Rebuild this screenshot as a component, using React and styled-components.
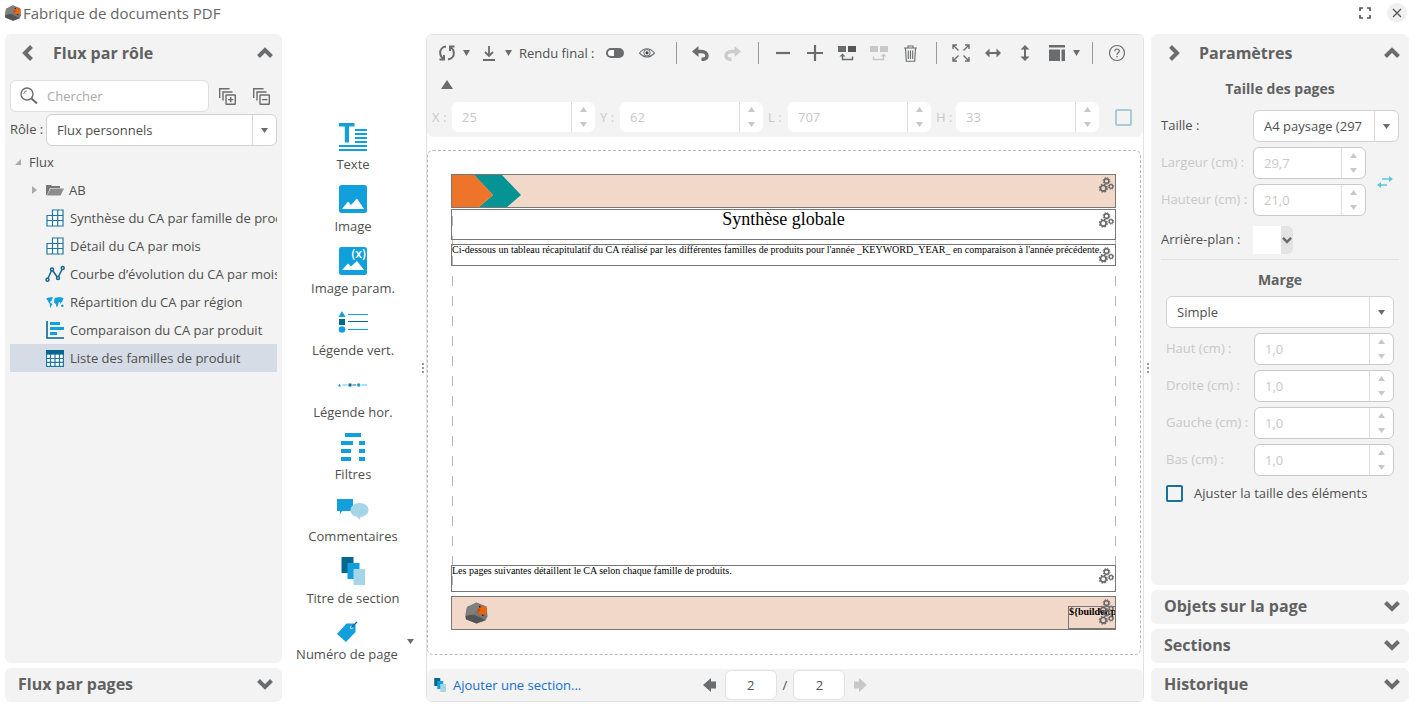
import React from "react";
import styled, { createGlobalStyle } from "styled-components";

const GlobalStyle = createGlobalStyle`
  * {
    box-sizing: border-box;
  }

  body {
    margin: 0;
    background: #fff;
    color: #4f4f4f;
    font-family: "Open Sans", "Noto Sans", sans-serif;
    font-size: 13px;
    line-height: 20px;
  }

  button, input, select {
    margin: 0;
    font: inherit;
    color: inherit;
  }

  button {
    padding: 0;
    border: 0;
    background: none;
    cursor: pointer;
  }

  svg {
    display: block;
    flex: none;
    overflow: visible;
  }
`;

const Window = styled.div`
  display: flex;
  flex-direction: column;
  min-height: 100vh;
`;

const TitleBar = styled.header`
  display: flex;
  align-items: center;
  gap: 2px;
  height: 26px;
  margin-bottom: 8px;
  padding: 0 9px 0 5px;
`;

const WindowTitle = styled.h1`
  flex: 1;
  margin: 0;
  font-size: 15px;
  font-weight: 400;
  color: #666;
`;

const WindowButton = styled.button`
  display: flex;
  align-items: center;
  justify-content: center;
  width: 20px;
  height: 20px;
  margin-left: 10px;
  border-radius: 10px;
  background: ${(props) => (props.$filled ? "#f0f0f0" : "none")};
`;

const Columns = styled.main`
  display: flex;
  flex: 1;
  padding: 0 7px 4px 5px;
`;

const SideColumn = styled.aside`
  display: flex;
  flex: none;
  flex-direction: column;
  gap: 5px;
  width: ${(props) => props.$width};
`;

const Panel = styled.section`
  flex: ${(props) => (props.$open ? "1" : "none")};
  border-radius: 6px;
  background: #f3f3f3;
`;

const PanelHeader = styled.div`
  display: flex;
  align-items: center;
  height: ${(props) => (props.$open ? "38px" : "34px")};
  padding: ${(props) => (props.$open ? "0 9px 0 13px" : "0 9px 2px 13px")};
`;

const PanelTitle = styled.h2`
  flex: 1;
  margin: 0;
  font-size: 16px;
  font-weight: 700;
  color: #616161;
`;

const ChevronButton = styled.button`
  display: flex;
  align-items: center;
  justify-content: ${(props) => (props.$lead ? "flex-start" : "center")};
  width: ${(props) => (props.$lead ? "35px" : "16px")};
  padding-left: ${(props) => (props.$lead ? "2px" : "0")};
  height: 20px;
`;

const PanelBody = styled.div`
  padding: ${(props) => props.$padding};
`;

const SearchRow = styled.div`
  display: flex;
  align-items: center;
  gap: 10px;
  margin-bottom: 2px;
  padding-right: 7px;
`;

const TreeActions = styled.div`
  display: flex;
  gap: 17px;
`;

const SearchBox = styled.label`
  display: flex;
  flex: 1;
  align-items: center;
  gap: 9px;
  height: 32px;
  padding-left: 9px;
  border: 1px solid #dedede;
  border-radius: 6px;
  background: #fff;

  input {
    width: 100%;
    min-width: 0;
    padding: 0;
    border: 0;
    outline: 0;
    background: none;
  }

  input::placeholder {
    color: #aaa;
  }
`;

const RoleRow = styled.div`
  display: flex;
  gap: 3px;
  margin-bottom: 2px;

  label {
    width: 33px;
    padding-top: 5px;
    white-space: nowrap;
  }
`;

const SelectBox = styled.div`
  display: grid;
  grid-template-columns: 1fr 24px;
  flex: 1;
  height: 32px;
  min-width: 0;
  border: 1px solid #d2d2d2;
  border-radius: 6px;
  background: #fff;

  select {
    grid-row: 1;
    grid-column: 1 / 3;
    min-width: 0;
    padding: 0 30px 0 10px;
    border: 0;
    outline: 0;
    appearance: none;
    background: none;
  }
`;

const SelectArrow = styled.span`
  display: flex;
  grid-row: 1;
  grid-column: 2;
  align-items: center;
  justify-content: center;
  border-left: 1px solid #d8d8d8;
  pointer-events: none;
`;

const Tree = styled.ul`
  margin: 0;
  padding: 0;
  list-style: none;
`;

const TreeRow = styled.li`
  display: flex;
  align-items: center;
  height: 28px;
  padding-left: ${(props) => props.$indent};
  overflow: hidden;
  white-space: nowrap;
  background: ${(props) => (props.$selected ? "#d5dce5" : "none")};

  svg {
    margin-right: ${(props) => props.$gap || "6px"};
  }
`;

const FolderLabel = styled.span`
  display: flex;
  align-items: center;
  padding-left: 4px;
`;

const Palette = styled.nav`
  display: flex;
  flex: none;
  flex-direction: column;
  align-items: center;
  gap: 11px;
  width: 134px;
  margin-left: 4px;
  padding-top: 89px;
`;

const PaletteItem = styled.button`
  display: flex;
  flex-direction: column;
  align-items: center;
  gap: ${(props) => (props.$compact ? "0" : "3px")};
`;

const PaletteIcon = styled.span`
  display: flex;
  align-items: center;
  justify-content: center;
  height: ${(props) => (props.$compact ? "25px" : "28px")};
`;

const PaletteLast = styled.div`
  display: flex;
  align-items: center;
  gap: 9px;
  padding-left: 4px;
`;

const Grip = styled.div`
  display: flex;
  flex: none;
  flex-direction: column;
  align-items: center;
  justify-content: center;
  gap: 2px;
  width: ${(props) => props.$width};

  span {
    width: 2px;
    height: 2px;
    background: #999;
  }
`;

const Editor = styled.section`
  display: flex;
  flex: 1;
  flex-direction: column;
  min-width: 0;
  border: 1px solid #e2e2e2;
  border-radius: 6px;
`;

const Toolbar = styled.div`
  padding: 0 4px 5px;
  border-radius: 6px;
  background: #f3f3f3;
`;

const ToolRow = styled.div`
  display: flex;
  align-items: center;
  height: 36px;
`;

const ToolButton = styled.button`
  display: flex;
  flex: none;
  align-items: center;
  justify-content: center;
  width: 32px;
  height: 26px;
`;

const CaretButton = styled.button`
  width: 8px;
  margin-right: 2px;
`;

const Separator = styled.span`
  width: 1px;
  height: 22px;
  margin: 0 8px 0 9px;
  background: #999;
`;

const RenderGroup = styled.div`
  display: flex;
  align-items: center;
  margin: 0 4px;
`;

const RenderLabel = styled.label`
  margin-right: 4px;
  white-space: nowrap;
`;

const Toggle = styled.input`
  width: 18px;
  height: 10px;
  margin: 0 7px;
  border: 2px solid #6a6c6e;
  border-radius: 5px;
  appearance: none;
  background: linear-gradient(90deg, #fff 6px, #6a6c6e 6px);
`;

const PositionRow = styled.div`
  display: flex;
  align-items: center;
  gap: 5px;
  margin-top: 5px;
  padding-left: 1px;
  color: #cacaca;

  label {
    width: 15px;
    white-space: nowrap;
  }
`;

const NumberBox = styled.div`
  display: flex;
  flex: ${(props) => (props.$width ? "none" : "1")};
  width: ${(props) => props.$width};
  height: ${(props) => (props.$flat ? "30px" : "32px")};
  overflow: hidden;
  border: ${(props) => (props.$flat ? "0" : "1px solid #c9c9c9")};
  border-radius: 6px;
  background: #fff;

  input {
    flex: 1;
    min-width: 0;
    padding: 0 10px;
    border: 0;
    background: none;
    color: #c8c8c8;
  }
`;

const Arrows = styled.div`
  display: flex;
  flex: none;
  flex-direction: column;
  width: 24px;
  border-left: 1px solid #dedede;

  button {
    display: flex;
    flex: 1;
    align-items: center;
    justify-content: center;
  }
`;

const Checkbox = styled.input`
  width: 17px;
  height: 17px;
  border: 2px solid ${(props) => (props.disabled ? "#aacbd9" : "#1b7299")};
  border-radius: 2px;
  appearance: none;
`;

const PositionCheckbox = styled(Checkbox)`
  margin-left: auto;
  margin-right: 7px;
`;

const Sheet = styled.div`
  position: relative;
  flex: 1;
  margin: 13px 2px 14px 0;
  border: 1px dashed #b8b8b8;
  border-radius: 6px;
  font-family: "Liberation Serif", serif;
  color: #000;
`;

const MarginGuides = styled.div`
  position: absolute;
  top: 45px;
  bottom: 69px;
  left: 24px;
  right: 24px;
  background-image:
    repeating-linear-gradient(#b5b5b5 0 10px, transparent 10px 20px),
    repeating-linear-gradient(#b5b5b5 0 10px, transparent 10px 20px);
  background-position: left top, right top;
  background-size: 1px 100%;
  background-repeat: no-repeat;
`;

const SheetObject = styled.div`
  position: absolute;
  top: ${(props) => props.$top};
  left: ${(props) => props.$left || "23px"};
  right: 24px;
  height: ${(props) => props.$height};
  overflow: hidden;
  border: 1px solid #777;
  background: ${(props) => props.$fill || "none"};
  font-size: ${(props) => props.$size || "10px"};
  font-weight: ${(props) => props.$weight || "400"};
  line-height: ${(props) => (props.$size ? "18px" : "10px")};
  text-align: ${(props) => props.$align || "left"};
  white-space: nowrap;
`;

const ObjectGear = styled.button`
  position: absolute;
  top: 2px;
  right: 1px;
`;

const FooterLogo = styled.div`
  padding: 5px 0 0 13px;
`;

const EditorFooter = styled.footer`
  display: grid;
  grid-template-columns: 1fr auto 1fr;
  align-items: center;
  height: 32px;
  padding: 0 7px;
  border-radius: 6px;
  background: #f3f3f3;
`;

const AddSection = styled.a`
  display: flex;
  align-items: center;
  gap: 7px;
  color: #1470cc;
  text-decoration: none;
`;

const Pager = styled.div`
  display: flex;
  align-items: center;
  gap: 6px;

  button {
    padding: 0 3px;
  }

  input {
    width: 52px;
    height: 30px;
    padding: 0;
    border: 1px solid #e2e2e2;
    border-radius: 6px;
    background: #fff;
    text-align: center;
  }
`;

const GroupTitle = styled.h3`
  margin: 0 0 11px;
  font-size: 14px;
  font-weight: 700;
  text-align: center;
  color: #616161;
`;

const SettingRow = styled.div`
  display: flex;
  align-items: center;
  margin-bottom: 5px;
  color: ${(props) => (props.$disabled ? "#c8c8c8" : "inherit")};

  > label {
    width: ${(props) => props.$label || "92px"};
    padding-bottom: 2px;
    white-space: nowrap;
  }
`;

const SizeFields = styled.div`
  display: flex;
  align-items: center;
  gap: 11px;

  > button {
    padding-bottom: 5px;
  }
`;

const ColorPicker = styled.button`
  display: flex;
  align-items: center;
  justify-content: flex-end;
  width: 40px;
  height: 28px;
  padding-right: 1px;
  border-radius: 0 6px 6px 0;
  background: linear-gradient(90deg, #fff 28px, #e3e3e3 28px);
`;

const BackgroundRow = styled(SettingRow)`
  padding: 5px 0;
  margin: 0;
  border-bottom: 1px solid #e0e0e0;
`;

const MarginGroup = styled.div`
  padding: 10px 5px 0;

  ${GroupTitle} {
    margin-bottom: 6px;
  }
`;

const AdjustLabel = styled.label`
  display: flex;
  align-items: center;
  gap: 11px;
  margin-top: 7px;
`;

const GREY = "#6a6c6e";
const BLUE = "#12a0dc";
const NAVY = "#05668f";
const PALE = "#a5d5e9";

function Chevron({ turn = 0, size = 16, color = GREY }) {
  return (
    <svg width={size} height={size} viewBox="0 0 16 16">
      <path
        d="M1.500 11.500L8 5l6.500 6.500"
        fill="none"
        stroke={color}
        strokeWidth="4"
        transform={`rotate(${turn} 8 8)`}
      />
    </svg>
  );
}

function Triangle({ width = 8, height = 6, up, color = GREY }) {
  const points = up
    ? `0,${height} ${width},${height} ${width / 2},0`
    : `0,0 ${width},0 ${width / 2},${height}`;
  return (
    <svg width={width} height={height}>
      <polygon points={points} fill={color} />
    </svg>
  );
}

function CubeLogo({ width = 16, height = 16 }) {
  return (
    <svg width={width} height={height} viewBox="0 0 22 22">
      <polygon points="1.500,5 11,0.500 21,4.500 22,14.500 20,18.500 11,21.500 0.500,17 0,13" fill="#777" />
      <polygon points="1.500,5 11,0.500 14,4 8,12.500 0,13" fill="#808080" />
      <polygon points="0,14 8,12.500 20,18 11,21.500 0.500,17.500" fill="#565354" />
      <polygon points="12.500,6 17,3.800 21.500,6 21,11.500 17.500,13.500 12,11" fill="#e8640f" />
      <polygon points="12.500,6 15.500,8 12,11" fill="#c24c08" />
      <rect x="13.500" y="4" width="1.500" height="1.500" fill="#222" />
      <rect x="16.500" y="12.500" width="1.500" height="1.500" fill="#222" />
    </svg>
  );
}

function FullscreenIcon() {
  return (
    <svg width="12" height="12" viewBox="0 0 12 12">
      <path d="M1 4V1h3M8 1h3v3M11 8v3H8M4 11H1V8" fill="none" stroke="#555" strokeWidth="1.700" />
    </svg>
  );
}

function CloseIcon() {
  return (
    <svg width="10" height="10" viewBox="0 0 10 10">
      <path d="M1 1l8 8M9 1L1 9" fill="none" stroke="#555" strokeWidth="1.300" />
    </svg>
  );
}

function SearchIcon() {
  return (
    <svg width="18" height="18" viewBox="0 0 18 18" fill="none" stroke={GREY}>
      <circle cx="7" cy="7" r="6" strokeWidth="1.400" />
      <path d="M3.800 7A3.300 3.300 0 0 1 7 3.800" strokeWidth="0.800" />
      <path d="M11.500 11.500l5.500 5" strokeWidth="2" />
    </svg>
  );
}

function StackIcon({ plus }) {
  return (
    <svg width="17" height="17" viewBox="0 0 17 17" fill="none" stroke={GREY} strokeWidth="1.400">
      <path d="M0.700 10V0.700H10.500M4 12.500V4H13.500" />
      <rect x="7" y="7" width="9.300" height="9.300" rx="0.500" />
      <path d={plus ? "M9 11.600h5.400M11.700 9v5.300" : "M9 11.600h5.400"} />
    </svg>
  );
}

function FolderIcon() {
  return (
    <svg width="18" height="12" viewBox="0 0 18 12">
      <path d="M0 1h5l1 1h8v2H4L1 11H0z" fill="#777" />
      <path d="M4.500 4.500H18L14.500 11.500H1z" fill="#8d8d8d" />
    </svg>
  );
}

function CrossTableIcon() {
  return (
    <svg width="18" height="18" viewBox="0 0 18 18" fill="#fff" stroke="#20789e" strokeWidth="1.200">
      <path d="M6.500 1H17v16H1V6.500h5.500z" />
      <path d="M6.500 6.500H17M1 11.500h16M6.500 6.500V17M11.700 1v16" />
    </svg>
  );
}

function CurveIcon() {
  return (
    <svg width="18" height="16" viewBox="0 0 18 16" fill="none" stroke="#14688d" strokeWidth="1.500">
      <path d="M2 12.300L5.400 4.800M6.800 4.800l4.200 5.900M12.500 10.500l3.500-7" />
      <circle cx="1.500" cy="13.700" r="1.500" />
      <circle cx="6" cy="3.500" r="1.500" />
      <circle cx="12" cy="12" r="1.500" />
      <circle cx="16.700" cy="2" r="1.500" />
    </svg>
  );
}

function WorldIcon() {
  return (
    <svg width="18" height="11" viewBox="0 0 18 11" fill={BLUE}>
      <path d="M0 1.500L3 0.500 6.500 0 7 1 5.500 2.500 6 3.500 4.500 4.500 4 5.500 5.800 6.500 6.500 7.500 5 9 4.600 11 3.800 9.500 3.800 7 2.500 5 1.300 3z" />
      <path d="M8 3l1-2 2-.5 2-.5 4.500 1-.5 1.500-.7 2-1 1-.6 1.500-.8-2-1 .2-.4 1-.8 3L10.500 10 9.800 7 8 5.500 8.200 4z" />
      <path d="M15 8l1.800-.6 1 1.600-1 1-1.800-.5z" />
    </svg>
  );
}

function BarsIcon() {
  return (
    <svg width="18" height="18" viewBox="0 0 18 18">
      <path d="M1 0v17h17" fill="none" stroke={NAVY} strokeWidth="1.600" />
      <path d="M4 1h10v3H4zM4 6h14v3H4zM4 11h7v3H4z" fill={BLUE} />
    </svg>
  );
}

function ListTableIcon() {
  return (
    <svg width="18" height="17" viewBox="0 0 18 17">
      <rect x="0.600" y="0.600" width="16.800" height="15.800" fill="#fff" stroke="#20789e" strokeWidth="1.200" />
      <path d="M0 8.500h18M0 12.300h18M4.500 4v13M9 4v13M13.500 4v13" stroke="#20789e" strokeWidth="1.200" />
      <path d="M0 0h18v4.600H0z" fill={NAVY} />
    </svg>
  );
}

function TextIcon() {
  return (
    <svg width="28" height="28" viewBox="0 0 28 28" fill={BLUE}>
      <path d="M0 0h15.500v3.500H10V19.500H5.800V3.500H0z" />
      <path d="M16 6h12v2H16zM16 10h12v2H16zM16 14h12v2H16zM16 18h12v2H16zM0 22h28v2H0zM0 26h28v2H0z" />
    </svg>
  );
}

function ImageIcon({ param }) {
  return (
    <svg width="28" height="28" viewBox="0 0 28 28">
      <rect width="28" height="28" rx="2.500" fill={BLUE} />
      <path d={param ? "M3 23l6-6.500 3 3 6-5.500L25 23z" : "M3 24l6-7.500 3 3.500 6-6.500L25 24z"} fill="#fff" />
      {param && (
        <text x="12.500" y="11" fill="#fff" fontSize="12" fontWeight="600" fontFamily="Open Sans, sans-serif">
          (x)
        </text>
      )}
    </svg>
  );
}

function VerticalLegendIcon() {
  return (
    <svg width="30" height="24" viewBox="0 0 30 24">
      <path d="M4 0l3.500 6h-7z" fill={BLUE} />
      <rect x="1" y="8" width="6" height="6" fill={NAVY} />
      <circle cx="4" cy="18.500" r="3.300" fill={BLUE} />
      <path d="M10 3.500h20M10 18.500h20" stroke={BLUE} />
      <path d="M10 10.500h20" stroke={NAVY} />
    </svg>
  );
}

function HorizontalLegendIcon() {
  return (
    <svg width="29" height="4" viewBox="0 0 29 4">
      <path d="M1.500 0.500L3 3.500H0z" fill={BLUE} />
      <path d="M4.500 2h5M23.500 2H29" stroke="#5dbde3" />
      <path d="M14.500 2H18" stroke={NAVY} />
      <rect x="10.500" y="0.500" width="3" height="3" fill={NAVY} />
      <circle cx="20.700" cy="2" r="1.700" fill={BLUE} />
    </svg>
  );
}

function FiltersIcon() {
  return (
    <svg width="24" height="28" viewBox="0 0 24 28">
      <path
        d="M4 0h16v4H4zM0 8h12v4H0zM18 8h6v4h-6zM0 16h10v4H0zM18 16h6v4h-6zM0 24h10v4H0zM18 24h6v4h-6z"
        fill={BLUE}
      />
    </svg>
  );
}

function CommentsIcon() {
  return (
    <svg width="32" height="21" viewBox="0 0 32 21">
      <path d="M0 0h16v12H5l-2 3.500V12H0z" fill={BLUE} />
      <path d="M22.500 4C28 4 31.500 7 31.500 11s-3.500 6.500-8 7l-1.300 3-2-3.200C16 17.500 13.500 14.500 13.500 11s3.500-7 9-7z" fill={PALE} />
    </svg>
  );
}

function SectionsIcon({ width = 24, height = 28 }) {
  return (
    <svg width={width} height={height} viewBox="0 0 24 28">
      <rect x="0.500" width="12" height="16" fill={NAVY} />
      <rect x="6.500" y="6" width="12" height="16" fill={BLUE} />
      <rect x="12.500" y="12" width="11.500" height="16" fill={PALE} />
    </svg>
  );
}

function TagIcon() {
  return (
    <svg width="20" height="20" viewBox="0 0 20 20">
      <path d="M0 12L9.500 1.500 17 1.500 18.500 3v7L9 20z" fill={BLUE} />
      <circle cx="14.500" cy="5.500" r="1.700" fill={PALE} />
      <path d="M14.500 5.500L20 0" stroke={NAVY} strokeWidth="1.200" />
    </svg>
  );
}

function RefreshIcon() {
  return (
    <svg width="16" height="16" viewBox="0 0 16 16" fill="none" stroke={GREY} strokeWidth="2">
      <path d="M7 1.500C3 2 1 5 1.200 8c.1 2.500 1.300 4.500 3 5.500M9 14.500c4-.5 6-3.500 5.800-6.500-.1-2.500-1.300-4.500-3-5.500" />
      <path d="M0.500 14.500H5V10M15.500 1.500H11V6" />
    </svg>
  );
}

function DownloadIcon() {
  return (
    <svg width="12" height="15" viewBox="0 0 12 15" fill="none" stroke={GREY} strokeWidth="1.800">
      <path d="M6 0v9.500M2 6l4 4 4-4M0 14h12" />
    </svg>
  );
}

function EyeIcon() {
  return (
    <svg width="16" height="10" viewBox="0 0 16 10" fill="none" stroke={GREY}>
      <path d="M0.500 5Q8-3.500 15.500 5Q8 13 0.500 5z" strokeWidth="1.100" />
      <circle cx="8" cy="4.800" r="3.200" strokeWidth="1" />
      <circle cx="8" cy="4.800" r="1.600" fill="#444" stroke="none" />
    </svg>
  );
}

function UndoIcon({ flip, color = GREY }) {
  return (
    <svg width="17" height="15" viewBox="0 0 17 15">
      <g transform={flip ? "translate(17 0) scale(-1 1)" : undefined}>
        <path d="M0 5.500L6.500 0v11z" fill={color} />
        <path d="M5 5.500h4.500c3.500 0 5.500 2 5.500 4.300 0 2-1.500 3.400-3.700 3.400H9.500" fill="none" stroke={color} strokeWidth="3.500" />
      </g>
    </svg>
  );
}

function PlusIcon({ minus }) {
  return (
    <svg width="16" height="16" viewBox="0 0 16 16">
      <path d={minus ? "M1 8h14" : "M0 8h16M8 0v16"} stroke={GREY} strokeWidth="2.200" />
    </svg>
  );
}

function SwapObjectIcon({ flip, dark = "#555", color = GREY }) {
  return (
    <svg width="18" height="15" viewBox="0 0 18 15">
      <path d="M0 0h8v6H0z" fill={color} />
      <path d="M10 0h8v6h-8z" fill={dark} />
      <g transform={flip ? "translate(18 0) scale(-1 1)" : undefined}>
        <path d="M4.500 7.500L7.500 10.500h-6z" fill={color} />
        <path d="M4.500 9v4.500h10V10.500" fill="none" stroke={color} strokeWidth="1.500" />
      </g>
    </svg>
  );
}

function TrashIcon() {
  return (
    <svg width="13" height="17" viewBox="0 0 13 17" fill="none" stroke={GREY} strokeWidth="1.100">
      <path d="M0 3h13M4 3V1h5v2M1.500 3.500l.8 12.700h8.400l.8-12.700M4.300 5.500v8.500M6.500 5.500v8.500M8.700 5.500v8.500" />
    </svg>
  );
}

function ExpandIcon() {
  return (
    <svg width="18" height="18" viewBox="0 0 18 18" fill="none" stroke={GREY} strokeWidth="1.400">
      <path d="M1 5V1h4M1 1l5.500 5.500M13 1h4v4M17 1l-5.500 5.500M17 13v4h-4M17 17l-5.500-5.500M5 17H1v-4M1 17l5.500-5.500" />
    </svg>
  );
}

function DoubleArrowIcon({ vertical }) {
  return (
    <svg width="16" height="16" viewBox="0 0 16 16">
      <g transform={vertical ? "rotate(90 8 8)" : undefined}>
        <path d="M3 8h10" stroke={GREY} strokeWidth="2" />
        <path d="M0 8l4.500-4.500v9zM16 8l-4.500-4.500v9z" fill={GREY} />
      </g>
    </svg>
  );
}

function LayoutIcon() {
  return (
    <svg width="16" height="16" viewBox="0 0 16 16" fill={GREY}>
      <path d="M0 0h16v2.500H0zM0 4.500h11V16H0zM12.500 4.500H16V16h-3.500z" />
    </svg>
  );
}

function HelpIcon() {
  return (
    <svg width="16" height="16" viewBox="0 0 16 16" fill="none" stroke={GREY}>
      <circle cx="8" cy="8" r="7.500" strokeWidth="1.200" />
      <path d="M5.800 6.200c0-1.400 1-2.200 2.200-2.200s2.300.8 2.300 2-1 1.500-1.700 2.200c-.5.400-.6.800-.6 1.600" strokeWidth="1.200" />
      <circle cx="8" cy="11.800" r="0.400" />
    </svg>
  );
}

function GearsIcon() {
  return (
    <svg width="15" height="16" viewBox="0 0 15 16" fill="none" stroke="#666">
      <circle cx="7.500" cy="4" r="2.300" strokeWidth="1.400" />
      <circle cx="7.500" cy="4" r="3.400" strokeWidth="1" strokeDasharray="1.500 1.170" />
      <circle cx="4.300" cy="11.300" r="2.800" strokeWidth="1.700" />
      <circle cx="4.300" cy="11.300" r="4" strokeWidth="1.100" strokeDasharray="1.700 1.440" />
      <circle cx="12" cy="9.500" r="1.800" strokeWidth="1.200" />
      <circle cx="12" cy="9.500" r="2.700" strokeWidth="0.900" strokeDasharray="1.200 0.920" />
    </svg>
  );
}

function BannerShape() {
  return (
    <svg width="69" height="32" viewBox="0 0 69 32">
      <polygon points="22,0 50,0 69,20 55,32 27,32 41,20" fill="#059393" />
      <polygon points="0,0 22,0 41,20 27,32 0,32" fill="#ee742a" />
    </svg>
  );
}

function SwapSizeIcon() {
  return (
    <svg width="16" height="12" viewBox="0 0 16 12">
      <path d="M5 3h8M3 9h7" stroke="#5cc8dc" strokeWidth="1.600" />
      <path d="M16 3l-4-3v6zM0 9l4-3v6z" fill="#5cc8dc" />
    </svg>
  );
}

function PageArrow({ flip, color = GREY }) {
  return (
    <svg width="13" height="14" viewBox="0 0 13 14">
      <path
        d="M0 7l8-7v3.500h5v7H8V14z"
        fill={color}
        transform={flip ? "translate(13 0) scale(-1 1)" : undefined}
      />
    </svg>
  );
}

const flows = [
  { name: "Synthèse du CA par famille de produits", icon: <CrossTableIcon /> },
  { name: "Détail du CA par mois", icon: <CrossTableIcon /> },
  { name: "Courbe d’évolution du CA par mois", icon: <CurveIcon /> },
  { name: "Répartition du CA par région", icon: <WorldIcon /> },
  { name: "Comparaison du CA par produit", icon: <BarsIcon /> },
  { name: "Liste des familles de produit", icon: <ListTableIcon />, selected: true },
];

const paletteItems = [
  { name: "Texte", icon: <TextIcon /> },
  { name: "Image", icon: <ImageIcon /> },
  { name: "Image param.", icon: <ImageIcon param /> },
  { name: "Légende vert.", icon: <VerticalLegendIcon /> },
  { name: "Légende hor.", icon: <HorizontalLegendIcon /> },
  { name: "Filtres", icon: <FiltersIcon /> },
  { name: "Commentaires", icon: <CommentsIcon /> },
  { name: "Titre de section", icon: <SectionsIcon /> },
];

const positions = [
  { id: "pos-x", label: "X :", value: "25" },
  { id: "pos-y", label: "Y :", value: "62" },
  { id: "pos-l", label: "L :", value: "707" },
  { id: "pos-h", label: "H :", value: "33" },
];

const margins = [
  { id: "margin-top", label: "Haut (cm) :" },
  { id: "margin-right", label: "Droite (cm) :" },
  { id: "margin-left", label: "Gauche (cm) :" },
  { id: "margin-bottom", label: "Bas (cm) :" },
];

function Select({ id, value }) {
  return (
    <SelectBox>
      <select id={id} defaultValue={value}>
        <option>{value}</option>
      </select>
      <SelectArrow>
        <Triangle width={7} height={5} />
      </SelectArrow>
    </SelectBox>
  );
}

function NumberField({ id, value, width, flat }) {
  return (
    <NumberBox $width={width} $flat={flat}>
      <input id={id} type="text" defaultValue={value} disabled />
      <Arrows>
        <button type="button" aria-label="Augmenter" disabled>
          <Triangle up width={7} height={5} color="#c8c8c8" />
        </button>
        <button type="button" aria-label="Diminuer" disabled>
          <Triangle width={7} height={5} color="#c8c8c8" />
        </button>
      </Arrows>
    </NumberBox>
  );
}

function ClosedPanel({ title }) {
  return (
    <Panel>
      <PanelHeader>
        <PanelTitle>{title}</PanelTitle>
        <ChevronButton aria-label="Ouvrir">
          <Chevron turn={180} />
        </ChevronButton>
      </PanelHeader>
    </Panel>
  );
}

function OpenPanel({ title, lead, padding, children }) {
  return (
    <Panel $open>
      <PanelHeader $open>
        <ChevronButton $lead aria-label="Masquer">
          <Chevron turn={lead} />
        </ChevronButton>
        <PanelTitle>{title}</PanelTitle>
        <ChevronButton aria-label="Replier">
          <Chevron />
        </ChevronButton>
      </PanelHeader>
      <PanelBody $padding={padding}>{children}</PanelBody>
    </Panel>
  );
}

function GripHandle({ width }) {
  return (
    <Grip $width={width}>
      <span />
      <span />
      <span />
    </Grip>
  );
}

function Tool({ label, disabled, children }) {
  return (
    <ToolButton type="button" aria-label={label} disabled={disabled}>
      {children}
    </ToolButton>
  );
}

function Caret({ label }) {
  return (
    <CaretButton type="button" aria-label={label}>
      <Triangle width={7} />
    </CaretButton>
  );
}

function FlowsColumn() {
  return (
    <SideColumn $width="277px">
      <OpenPanel title="Flux par rôle" lead={-90} padding="8px 5px 0">
        <SearchRow>
          <SearchBox>
            <SearchIcon />
            <input type="text" placeholder="Chercher" aria-label="Chercher" />
          </SearchBox>
          <TreeActions>
            <button type="button" aria-label="Tout déplier">
              <StackIcon plus />
            </button>
            <button type="button" aria-label="Tout replier">
              <StackIcon />
            </button>
          </TreeActions>
        </SearchRow>
        <RoleRow>
          <label htmlFor="role">Rôle :</label>
          <Select id="role" value="Flux personnels" />
        </RoleRow>
        <Tree>
          <TreeRow $indent="5px" $gap="8px">
            <svg width="6" height="6">
              <polygon points="0,6 6,6 6,0" fill="#aaa" />
            </svg>
            Flux
          </TreeRow>
          <TreeRow $indent="22px" $gap="5px">
            <svg width="5" height="8">
              <polygon points="0,0 5,4 0,8" fill="#aaa" />
            </svg>
            <FolderLabel>
              <FolderIcon />
              AB
            </FolderLabel>
          </TreeRow>
          {flows.map((flow) => (
            <TreeRow key={flow.name} $indent="36px" $selected={flow.selected}>
              {flow.icon}
              {flow.name}
            </TreeRow>
          ))}
        </Tree>
      </OpenPanel>
      <ClosedPanel title="Flux par pages" />
    </SideColumn>
  );
}

function ObjectPalette() {
  return (
    <Palette>
      {paletteItems.map((item) => (
        <PaletteItem key={item.name} type="button">
          <PaletteIcon>{item.icon}</PaletteIcon>
          {item.name}
        </PaletteItem>
      ))}
      <PaletteLast>
        <PaletteItem type="button" $compact>
          <PaletteIcon $compact>
            <TagIcon />
          </PaletteIcon>
          Numéro de page
        </PaletteItem>
        <button type="button" aria-label="Autres objets">
          <Triangle width={7} height={5} />
        </button>
      </PaletteLast>
    </Palette>
  );
}

function EditorToolbar() {
  return (
    <Toolbar>
      <ToolRow>
        <Tool label="Actualiser">
          <RefreshIcon />
        </Tool>
        <Caret label="Options d’actualisation" />
        <Tool label="Télécharger">
          <DownloadIcon />
        </Tool>
        <Caret label="Options de téléchargement" />
        <RenderGroup>
          <RenderLabel htmlFor="final-render">Rendu final :</RenderLabel>
          <Toggle id="final-render" type="checkbox" />
          <Tool label="Aperçu">
            <EyeIcon />
          </Tool>
        </RenderGroup>
        <Separator />
        <Tool label="Annuler">
          <UndoIcon />
        </Tool>
        <Tool label="Rétablir" disabled>
          <UndoIcon flip color="#ccc" />
        </Tool>
        <Separator />
        <Tool label="Zoom arrière">
          <PlusIcon minus />
        </Tool>
        <Tool label="Zoom avant">
          <PlusIcon />
        </Tool>
        <Tool label="Reculer">
          <SwapObjectIcon />
        </Tool>
        <Tool label="Avancer" disabled>
          <SwapObjectIcon flip dark="#c8c8c8" color="#c8c8c8" />
        </Tool>
        <Tool label="Supprimer">
          <TrashIcon />
        </Tool>
        <Separator />
        <Tool label="Page entière">
          <ExpandIcon />
        </Tool>
        <Tool label="Largeur">
          <DoubleArrowIcon />
        </Tool>
        <Tool label="Hauteur">
          <DoubleArrowIcon vertical />
        </Tool>
        <Tool label="Disposition">
          <LayoutIcon />
        </Tool>
        <Caret label="Options de disposition" />
        <Separator />
        <Tool label="Aide">
          <HelpIcon />
        </Tool>
      </ToolRow>
      <Tool label="Replier la barre">
        <Triangle up width={12} height={9} />
      </Tool>
      <PositionRow>
        {positions.map((field) => (
          <React.Fragment key={field.id}>
            <label htmlFor={field.id}>{field.label}</label>
            <NumberField id={field.id} value={field.value} width="143px" flat />
          </React.Fragment>
        ))}
        <PositionCheckbox type="checkbox" aria-label="Conserver les proportions" disabled />
      </PositionRow>
    </Toolbar>
  );
}

function Gear() {
  return (
    <ObjectGear type="button" aria-label="Propriétés">
      <GearsIcon />
    </ObjectGear>
  );
}

function DocumentSheet() {
  return (
    <Sheet>
      <MarginGuides />
      <SheetObject $top="23px" $height="34px" $fill="#f2d8c9">
        <BannerShape />
        <Gear />
      </SheetObject>
      <SheetObject $top="58px" $height="31px" $size="18px" $align="center">
        Synthèse globale
        <Gear />
      </SheetObject>
      <SheetObject $top="93px" $height="22px">
        Ci-dessous un tableau récapitulatif du CA réalisé par les différentes familles de produits pour
        l'année _KEYWORD_YEAR_ en comparaison à l'année précédente.
        <Gear />
      </SheetObject>
      <SheetObject $top="414px" $height="27px">
        Les pages suivantes détaillent le CA selon chaque famille de produits.
        <Gear />
      </SheetObject>
      <SheetObject $top="445px" $height="34px" $fill="#f2d8c9">
        <FooterLogo>
          <CubeLogo width={23} height={22} />
        </FooterLogo>
        <Gear />
      </SheetObject>
      <SheetObject $top="455px" $height="23px" $left="calc(100% - 72px)" $weight="700">
        {"${builder.page}"}
        <Gear />
      </SheetObject>
    </Sheet>
  );
}

function SettingsColumn() {
  return (
    <SideColumn $width="258px">
      <OpenPanel title="Paramètres" lead={90} padding="7px 10px 0">
        <GroupTitle>Taille des pages</GroupTitle>
        <SettingRow>
          <label htmlFor="page-size">Taille :</label>
          <Select id="page-size" value="A4 paysage (297" />
        </SettingRow>
        <SizeFields>
          <div>
            <SettingRow $disabled>
              <label htmlFor="page-width">Largeur (cm) :</label>
              <NumberField id="page-width" value="29,7" width="113px" />
            </SettingRow>
            <SettingRow $disabled>
              <label htmlFor="page-height">Hauteur (cm) :</label>
              <NumberField id="page-height" value="21,0" width="113px" />
            </SettingRow>
          </div>
          <button type="button" aria-label="Inverser les dimensions">
            <SwapSizeIcon />
          </button>
        </SizeFields>
        <BackgroundRow>
          <label htmlFor="background">Arrière-plan :</label>
          <ColorPicker id="background" type="button">
            <Chevron turn={180} size={10} />
          </ColorPicker>
        </BackgroundRow>
        <MarginGroup>
          <GroupTitle>Marge</GroupTitle>
          <SettingRow>
            <Select id="margin-mode" value="Simple" />
          </SettingRow>
          {margins.map((margin) => (
            <SettingRow key={margin.id} $label="88px" $disabled>
              <label htmlFor={margin.id}>{margin.label}</label>
              <NumberField id={margin.id} value="1,0" />
            </SettingRow>
          ))}
          <AdjustLabel>
            <Checkbox type="checkbox" />
            Ajuster la taille des éléments
          </AdjustLabel>
        </MarginGroup>
      </OpenPanel>
      <ClosedPanel title="Objets sur la page" />
      <ClosedPanel title="Sections" />
      <ClosedPanel title="Historique" />
    </SideColumn>
  );
}

function App() {
  return (
    <>
      <GlobalStyle />
      <Window>
        <TitleBar>
          <CubeLogo />
          <WindowTitle>Fabrique de documents PDF</WindowTitle>
          <WindowButton type="button" aria-label="Plein écran">
            <FullscreenIcon />
          </WindowButton>
          <WindowButton type="button" aria-label="Fermer" $filled>
            <CloseIcon />
          </WindowButton>
        </TitleBar>
        <Columns>
          <FlowsColumn />
          <ObjectPalette />
          <GripHandle width="6px" />
          <Editor>
            <EditorToolbar />
            <DocumentSheet />
            <EditorFooter>
              <AddSection href="#">
                <SectionsIcon width={12} height={14} />
                Ajouter une section...
              </AddSection>
              <Pager>
                <button type="button" aria-label="Page précédente">
                  <PageArrow />
                </button>
                <input type="text" defaultValue="2" aria-label="Page" />
                /
                <input type="text" defaultValue="2" aria-label="Nombre de pages" />
                <button type="button" aria-label="Page suivante" disabled>
                  <PageArrow flip color="#c8c8c8" />
                </button>
              </Pager>
            </EditorFooter>
          </Editor>
          <GripHandle width="7px" />
          <SettingsColumn />
        </Columns>
      </Window>
    </>
  );
}

export default App;
